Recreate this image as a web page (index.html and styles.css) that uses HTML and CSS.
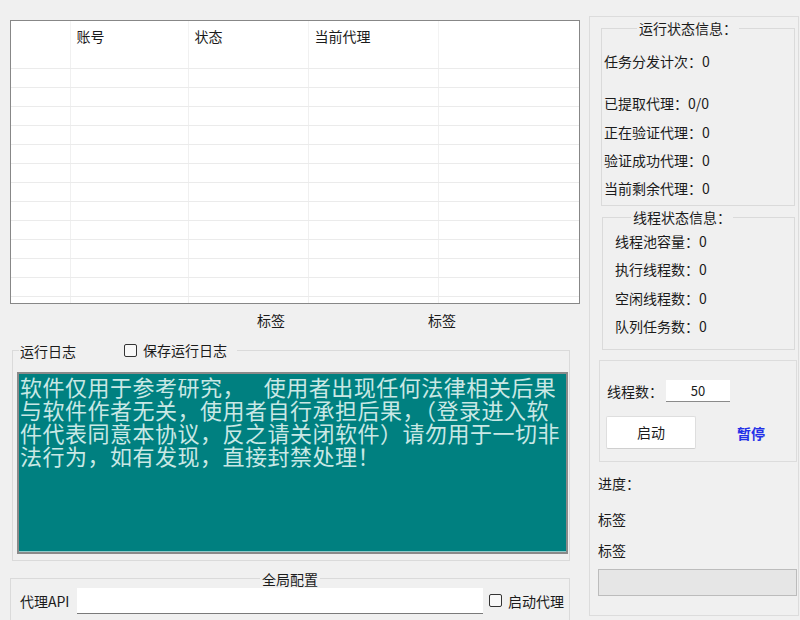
FILE: index.html
```html
<!DOCTYPE html>
<html lang="zh-CN">
<head>
<meta charset="utf-8">
<title>运行</title>
<link rel="stylesheet" href="styles.css">
</head>
<body>
<div class="app">
  <div class="left">
    <div class="grid-wrap">
      <table class="grid">
        <colgroup><col class="c0"><col class="c1"><col class="c2"><col class="c3"><col class="c4"></colgroup>
        <thead><tr><th></th><th>账号</th><th>状态</th><th>当前代理</th><th></th></tr></thead>
        <tbody>
          <tr><td></td><td></td><td></td><td></td><td></td></tr>
          <tr><td></td><td></td><td></td><td></td><td></td></tr>
          <tr><td></td><td></td><td></td><td></td><td></td></tr>
          <tr><td></td><td></td><td></td><td></td><td></td></tr>
          <tr><td></td><td></td><td></td><td></td><td></td></tr>
          <tr><td></td><td></td><td></td><td></td><td></td></tr>
          <tr><td></td><td></td><td></td><td></td><td></td></tr>
          <tr><td></td><td></td><td></td><td></td><td></td></tr>
          <tr><td></td><td></td><td></td><td></td><td></td></tr>
          <tr><td></td><td></td><td></td><td></td><td></td></tr>
          <tr><td></td><td></td><td></td><td></td><td></td></tr>
          <tr><td></td><td></td><td></td><td></td><td></td></tr>
          <tr><td></td><td></td><td></td><td></td><td></td></tr>
          <tr><td></td><td></td><td></td><td></td><td></td></tr>
        </tbody>
      </table>
    </div>
    <div class="labels"><span>标签</span><span>标签</span></div>
    <fieldset class="log">
      <legend><span class="log-title">运行日志</span><span class="chk"><span class="box"></span>保存运行日志</span></legend>
      <div class="console"><div class="cl">软件仅用于参考研究，  使用者出现任何法律相关后果</div><div class="cl">与软件作者无关，使用者自行承担后果，（登录进入软</div><div class="cl">件代表同意本协议，反之请关闭软件）请勿用于一切非</div><div class="cl">法行为，如有发现，直接封禁处理！</div></div>
    </fieldset>
    <fieldset class="global">
      <legend>全局配置</legend>
      <div class="api-row">
        <span class="api-label">代理API</span>
        <span class="text-input wide"></span>
        <span class="chk"><span class="box"></span>启动代理</span>
      </div>
    </fieldset>
  </div>
  <div class="right">
    <fieldset class="status">
      <legend>运行状态信息：</legend>
      <div class="item i1">任务分发计次：0</div>
      <div class="item i2">已提取代理：0/0</div>
      <div class="item i3">正在验证代理：0</div>
      <div class="item i4">验证成功代理：0</div>
      <div class="item i4">当前剩余代理：0</div>
    </fieldset>
    <fieldset class="thread">
      <legend>线程状态信息：</legend>
      <div class="item t1">线程池容量：0</div>
      <div class="item t2">执行线程数：0</div>
      <div class="item t3">空闲线程数：0</div>
      <div class="item t2">队列任务数：0</div>
    </fieldset>
    <div class="ctrl">
      <div class="ctrl-row"><span>线程数：</span><span class="num-input">50</span></div>
      <div class="ctrl-row second"><span class="btn">启动</span><span class="link">暂停</span></div>
    </div>
    <div class="prog-label p1">进度：</div>
    <div class="prog-label p2">标签</div>
    <div class="prog-label p3">标签</div>
    <div class="progress"></div>
  </div>
</div>
</body>
</html>
```
FILE: styles.css
```css
html, body {
  margin: 0;
  padding: 0;
  background: #f0f0f0;
}
body {
  font-family: "Noto Sans CJK SC", "Microsoft YaHei", sans-serif;
  font-size: 14px;
  line-height: 20px;
  color: #1b1b1b;
  width: 800px;
  height: 620px;
  overflow: hidden;
}
.app {
  display: flex;
  align-items: flex-start;
}
.left {
  width: 589px;
  padding-left: 10px;
  box-sizing: border-box;
}

/* list view */
.grid-wrap {
  margin-top: 20px;
  width: 570px;
  height: 284px;
  box-sizing: border-box;
  border: 1px solid #878787;
  background: #fff;
  overflow: hidden;
}
.grid {
  border-collapse: collapse;
  table-layout: fixed;
  width: 568px;
}
.c0 { width: 59px; }
.c1 { width: 118px; }
.c2 { width: 120px; }
.c3 { width: 130px; }
.c4 { width: 141px; }
.grid th {
  height: 29px;
  padding: 5px 0 0 6px;
  box-sizing: border-box;
  text-align: left;
  vertical-align: top;
  font-weight: normal;
  border-right: 1px solid #f3f3f3;
}
.grid td {
  height: 18px;
  padding: 0;
  border-bottom: 1px solid #ebebeb;
  border-right: 1px solid #f0f0f0;
}
.grid th:last-child, .grid td:last-child { border-right: none; }

.labels {
  height: 32px;
  display: flex;
  align-items: center;
  padding-left: 247px;
  gap: 143px;
}

/* group boxes */
fieldset {
  margin: 0;
  padding: 0;
  border: 1px solid #dadada;
  box-sizing: border-box;
  min-inline-size: 0;
}
legend {
  line-height: 20px;
  padding: 0 2px;
}
.log {
  margin: 4px 0 0 2px;
  width: 558px;
  padding-bottom: 6px;
}
.log legend {
  margin-left: 6px;
  padding: 0 10px 0 1px;
}
.log-title {
  display: inline-block;
  margin-right: 48px;
}
.chk {
  display: inline-flex;
  align-items: center;
}
.box {
  display: inline-block;
  width: 13px;
  height: 13px;
  box-sizing: border-box;
  border: 1px solid #333;
  border-radius: 2px;
  background: #f8f8f8;
  margin-right: 6px;
}
.console {
  margin: 11px 0 0 4px;
  width: 551px;
  height: 182px;
  box-sizing: border-box;
  background: #008080;
  border: 2px solid #8a8a8a;
  box-shadow: inset 0 -1px 0 #8fcaca;
  color: #c9e8e5;
  font-size: 22px;
  letter-spacing: 0.5px;
  padding: 1px 0 0 1px;
  word-spacing: 4px;
  white-space: pre;
}
.cl {
  height: 23px;
  line-height: 23px;
}
.global {
  margin-top: 8px;
  width: 560px;
  height: 60px;
}
.global legend {
  margin: 0 auto;
}
.api-row {
  display: flex;
  align-items: center;
  padding-left: 9px;
  margin-top: -1px;
}
.api-label {
  width: 57px;
}
.text-input {
  display: inline-block;
  background: #fff;
  border-bottom: 1px solid #7a7a7a;
  box-sizing: border-box;
}
.text-input.wide {
  width: 406px;
  height: 26px;
  margin-right: 6px;
}

/* right side */
.right {
  width: 210px;
  height: 600px;
  margin-top: 16px;
  border: 1px solid #dcdcdc;
  box-sizing: border-box;
}
.item { line-height: 20px; }
.status {
  margin: 1px 0 0 11px;
  width: 194px;
  padding: 0 0 7px 2px;
}
.status legend { margin-left: 33px; }
.i1 { margin-top: 13px; }
.i2 { margin-top: 22px; }
.i3 { margin-top: 9px; }
.i4 { margin-top: 8px; }
.thread {
  margin: 1px 0 0 12px;
  width: 193px;
  padding: 0 0 13px 12px;
}
.thread legend { margin-left: 16px; }
.t1 { margin-top: 4px; }
.t2 { margin-top: 8px; }
.t3 { margin-top: 9px; }
.ctrl {
  margin: 10px 0 0 9px;
  width: 198px;
  border: 1px solid #dcdcdc;
  box-sizing: border-box;
  padding: 19px 0 12px 7px;
}
.ctrl-row {
  display: flex;
  align-items: center;
  height: 22px;
}
.ctrl-row.second {
  height: 33px;
  margin-top: 14px;
}
.num-input {
  display: inline-block;
  margin-left: 3px;
  width: 64px;
  height: 22px;
  line-height: 22px;
  text-align: center;
  background: #fff;
  border-bottom: 1px solid #8a8a8a;
  box-sizing: border-box;
  font-size: 13px;
}
.btn {
  display: inline-block;
  margin-left: -1px;
  width: 90px;
  height: 33px;
  line-height: 31px;
  text-align: center;
  background: #fff;
  border: 1px solid #dedede;
  border-bottom-color: #cfcfcf;
  border-radius: 2px;
  box-sizing: border-box;
}
.link {
  margin-left: 41px;
  color: #2430e8;
  font-weight: bold;
}
.prog-label {
  margin-left: 8px;
  line-height: 20px;
}
.p1 { margin-top: 11px; }
.p2 { margin-top: 16px; }
.p3 { margin-top: 11px; }
.progress {
  margin: 9px 0 0 8px;
  width: 199px;
  height: 27px;
  box-sizing: border-box;
  background: #e6e6e6;
  border: 1px solid #bcbcbc;
}
```
